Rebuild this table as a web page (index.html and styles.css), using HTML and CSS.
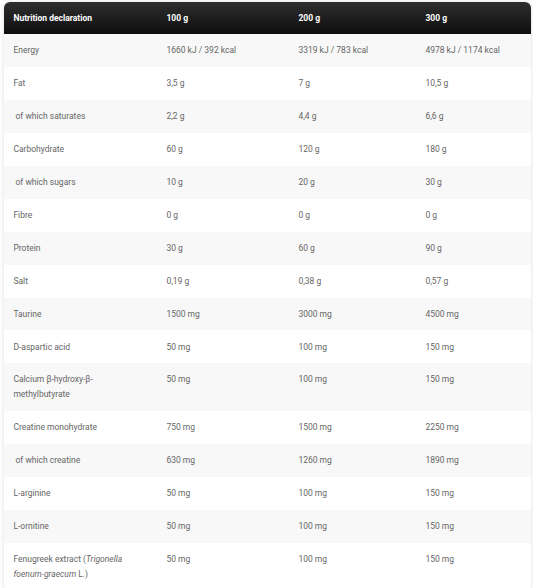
FILE: index.html
```html
<!DOCTYPE html>
<html lang="en">
<head>
<meta charset="utf-8">
<title>Nutrition declaration</title>
<link rel="stylesheet" href="styles.css">
</head>
<body>
<div class="wrap">
  <table class="nutri">
    <colgroup>
      <col class="c1"><col class="c2"><col class="c3"><col class="c4">
    </colgroup>
    <thead>
      <tr><th>Nutrition declaration</th><th>100 g</th><th>200 g</th><th>300 g</th></tr>
    </thead>
    <tbody>
      <tr><td>Energy</td><td>1660 kJ / 392 kcal</td><td>3319 kJ / 783 kcal</td><td>4978 kJ / 1174 kcal</td></tr>
      <tr><td>Fat</td><td>3,5 g</td><td>7 g</td><td>10,5 g</td></tr>
      <tr><td>&nbsp;of which saturates</td><td>2,2 g</td><td>4,4 g</td><td>6,6 g</td></tr>
      <tr><td>Carbohydrate</td><td>60 g</td><td>120 g</td><td>180 g</td></tr>
      <tr><td>&nbsp;of which sugars</td><td>10 g</td><td>20 g</td><td>30 g</td></tr>
      <tr><td>Fibre</td><td>0 g</td><td>0 g</td><td>0 g</td></tr>
      <tr><td>Protein</td><td>30 g</td><td>60 g</td><td>90 g</td></tr>
      <tr><td>Salt</td><td>0,19 g</td><td>0,38 g</td><td>0,57 g</td></tr>
      <tr><td>Taurine</td><td>1500 mg</td><td>3000 mg</td><td>4500 mg</td></tr>
      <tr><td>D-aspartic acid</td><td>50 mg</td><td>100 mg</td><td>150 mg</td></tr>
      <tr><td>Calcium β-hydroxy-β-<br>methylbutyrate</td><td>50 mg</td><td>100 mg</td><td>150 mg</td></tr>
      <tr><td>Creatine monohydrate</td><td>750 mg</td><td>1500 mg</td><td>2250 mg</td></tr>
      <tr><td>&nbsp;of which creatine</td><td>630 mg</td><td>1260 mg</td><td>1890 mg</td></tr>
      <tr><td>L-arginine</td><td>50 mg</td><td>100 mg</td><td>150 mg</td></tr>
      <tr><td>L-ornitine</td><td>50 mg</td><td>100 mg</td><td>150 mg</td></tr>
      <tr><td>Fenugreek extract (<em>Trigonella<br>foenum-graecum</em> L.)</td><td>50 mg</td><td>100 mg</td><td>150 mg</td></tr>
    </tbody>
  </table>
</div>
</body>
</html>
```
FILE: styles.css
```css
html, body {
  margin: 0;
  padding: 0;
  background: #ffffff;
}

.wrap {
  padding: 2px 2px 0 4px;
}

.nutri {
  width: 527px;
  border-collapse: separate;
  border-spacing: 0;
  table-layout: fixed;
  font-family: Roboto, "Liberation Sans", Arial, sans-serif;
  font-size: 8.5px;
  line-height: 15px;
  color: #666666;
  border-radius: 6px;
  box-shadow: 0 0 4px rgba(0, 0, 0, 0.15);
  overflow: hidden;
  background: #ffffff;
}

.c1 { width: 153px; }
.c2 { width: 132px; }
.c3 { width: 127px; }
.c4 { width: auto; }

.nutri th,
.nutri td {
  text-align: left;
  vertical-align: top;
  padding: 9.1px 9px 8.85px 9.4px;
}

.nutri thead th {
  background: linear-gradient(#2e2e2e, #0e0e0e);
  color: #ffffff;
  font-weight: 700;
  padding-top: 8.5px;
  padding-bottom: 8.5px;
}

.nutri tbody tr:nth-child(odd) td {
  background: #f8f8f8;
}

.nutri tbody tr:nth-child(even) td {
  background: #ffffff;
}

.nutri em {
  font-style: italic;
}
```
